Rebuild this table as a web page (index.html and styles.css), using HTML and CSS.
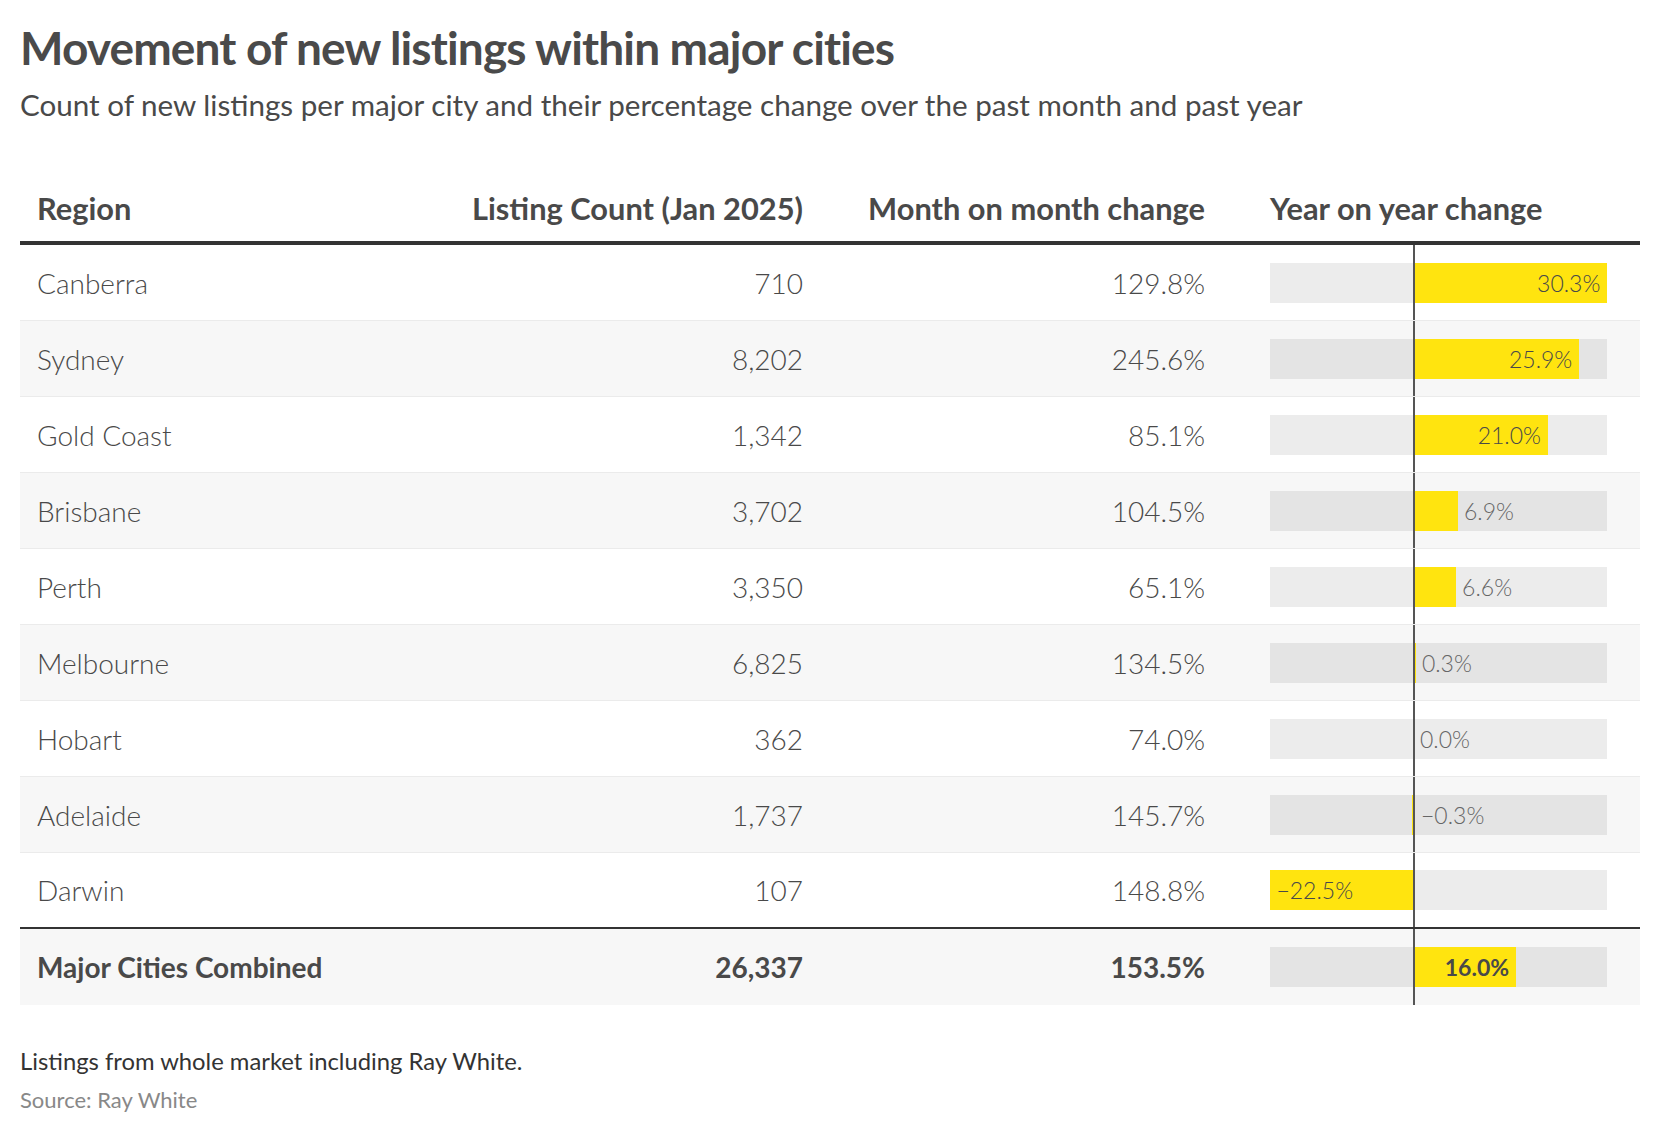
FILE: index.html
```html
<!DOCTYPE html>
<html lang="en">
<head>
<meta charset="utf-8">
<title>Movement of new listings within major cities</title>
<link rel="stylesheet" href="styles.css">
</head>
<body>
<div class="chart">
  <h1 class="title">Movement of new listings within major cities</h1>
  <p class="subtitle">Count of new listings per major city and their percentage change over the past month and past year</p>
  <div class="table">
    <div class="row head">
      <div class="cell c1">Region</div>
      <div class="cell c2">Listing Count (Jan 2025)</div>
      <div class="cell c3">Month on month change</div>
      <div class="cell c4">Year on year change</div>
    </div>
    <div class="row">
      <div class="cell c1">Canberra</div><div class="cell c2">710</div><div class="cell c3">129.8%</div>
      <div class="cell c4"><span class="zero"></span><div class="track"><span class="bar pos" style="width:193.4px"><span class="in">30.3%</span></span></div></div>
    </div>
    <div class="row alt">
      <div class="cell c1">Sydney</div><div class="cell c2">8,202</div><div class="cell c3">245.6%</div>
      <div class="cell c4"><span class="zero"></span><div class="track"><span class="bar pos" style="width:165.3px"><span class="in">25.9%</span></span></div></div>
    </div>
    <div class="row">
      <div class="cell c1">Gold Coast</div><div class="cell c2">1,342</div><div class="cell c3">85.1%</div>
      <div class="cell c4"><span class="zero"></span><div class="track"><span class="bar pos" style="width:134px"><span class="in">21.0%</span></span></div></div>
    </div>
    <div class="row alt">
      <div class="cell c1">Brisbane</div><div class="cell c2">3,702</div><div class="cell c3">104.5%</div>
      <div class="cell c4"><span class="zero"></span><div class="track"><span class="bar pos" style="width:44px"><span class="out">6.9%</span></span></div></div>
    </div>
    <div class="row">
      <div class="cell c1">Perth</div><div class="cell c2">3,350</div><div class="cell c3">65.1%</div>
      <div class="cell c4"><span class="zero"></span><div class="track"><span class="bar pos" style="width:42.1px"><span class="out">6.6%</span></span></div></div>
    </div>
    <div class="row alt">
      <div class="cell c1">Melbourne</div><div class="cell c2">6,825</div><div class="cell c3">134.5%</div>
      <div class="cell c4"><span class="zero"></span><div class="track"><span class="bar pos" style="width:1.9px"><span class="out">0.3%</span></span></div></div>
    </div>
    <div class="row">
      <div class="cell c1">Hobart</div><div class="cell c2">362</div><div class="cell c3">74.0%</div>
      <div class="cell c4"><span class="zero"></span><div class="track"><span class="bar pos" style="width:0px"><span class="out">0.0%</span></span></div></div>
    </div>
    <div class="row alt">
      <div class="cell c1">Adelaide</div><div class="cell c2">1,737</div><div class="cell c3">145.7%</div>
      <div class="cell c4"><span class="zero"></span><div class="track"><span class="bar neg" style="width:1.9px"></span><span class="negout">−0.3%</span></div></div>
    </div>
    <div class="row last">
      <div class="cell c1">Darwin</div><div class="cell c2">107</div><div class="cell c3">148.8%</div>
      <div class="cell c4"><span class="zero"></span><div class="track"><span class="bar neg" style="width:143.6px"><span class="inl">−22.5%</span></span></div></div>
    </div>
    <div class="row alt total">
      <div class="cell c1">Major Cities Combined</div><div class="cell c2">26,337</div><div class="cell c3">153.5%</div>
      <div class="cell c4"><span class="zero"></span><div class="track"><span class="bar pos" style="width:102.1px"><span class="in">16.0%</span></span></div></div>
    </div>
  </div>
  <p class="note">Listings from whole market including Ray White.</p>
  <p class="source">Source: Ray White</p>
</div>
</body>
</html>
```

FILE: styles.css
```css
* { box-sizing: border-box; }
html, body { margin: 0; padding: 0; background: #fff; }
body { font-family: Lato, "Noto Sans", sans-serif; color: #494949; }
.chart { padding: 20px 20px 0 20px; }
.title {
  margin: 0;
  font-size: 46px;
  line-height: 55px;
  font-weight: 700;
  color: #4a4a4a;
  letter-spacing: -0.85px;
}
.subtitle {
  margin: 12px 0 0 0;
  font-size: 29.6px;
  line-height: 36px;
  font-weight: 400;
  color: #494949;
}
.table { margin-top: 27px; width: 1620px; }
.row {
  display: grid;
  grid-template-columns: 420px 380px 402px 418px;
  height: 76px;
  border-bottom: 1px solid #ebebeb;
  background: #fff;
}
.row.alt { background: #f7f7f7; }
.row.head {
  height: 95px;
  border-bottom: 4px solid #333;
  background: #fff;
}
.row.last { border-bottom: 2px solid #333; }
.row.total { border-bottom: none; }
.cell {
  display: flex;
  align-items: center;
  padding: 0 17px;
  font-size: 28px;
  font-weight: 300;
  color: #494949;
  white-space: nowrap;
}
.head .cell {
  font-weight: 700;
  font-size: 30.8px;
  line-height: 37px;
  align-items: flex-end;
  padding-bottom: 14px;
}
.total .cell { font-weight: 700; }
.c2, .c3 { justify-content: flex-end; }
.c4 { padding-left: 48px; padding-right: 0; position: relative; }
.track {
  position: relative;
  width: 337px;
  height: 40px;
  background: rgba(0, 0, 0, 0.075);
}
.zero {
  position: absolute;
  left: 191px;
  top: 0;
  bottom: 0;
  width: 2px;
  background: #555;
  z-index: 2;
}
.bar {
  position: absolute;
  top: 0;
  height: 40px;
  background: #ffe40f;
  display: flex;
  align-items: center;
}
.bar.pos { left: 144px; }
.bar.neg { right: 193px; }
.bar .in,
.bar .out,
.bar .inl,
.negout {
  font-size: 23px;
  font-weight: 300;
  white-space: nowrap;
}
.bar .in {
  position: absolute;
  right: 7px;
  color: #494949;
}
.bar .out {
  position: absolute;
  left: 100%;
  margin-left: 6px;
  color: #666;
}
.bar .inl {
  position: absolute;
  left: 6px;
  color: #494949;
}
.negout {
  position: absolute;
  left: 151px;
  top: 0;
  height: 40px;
  display: flex;
  align-items: center;
  color: #666;
}
.total .bar .in { font-weight: 700; color: #494949; }
.note {
  margin: 41px 0 0 0;
  font-size: 23.8px;
  line-height: 30px;
  color: #333;
}
.source {
  margin: 10px 0 0 0;
  font-size: 22px;
  line-height: 28px;
  color: #888;
}
```
